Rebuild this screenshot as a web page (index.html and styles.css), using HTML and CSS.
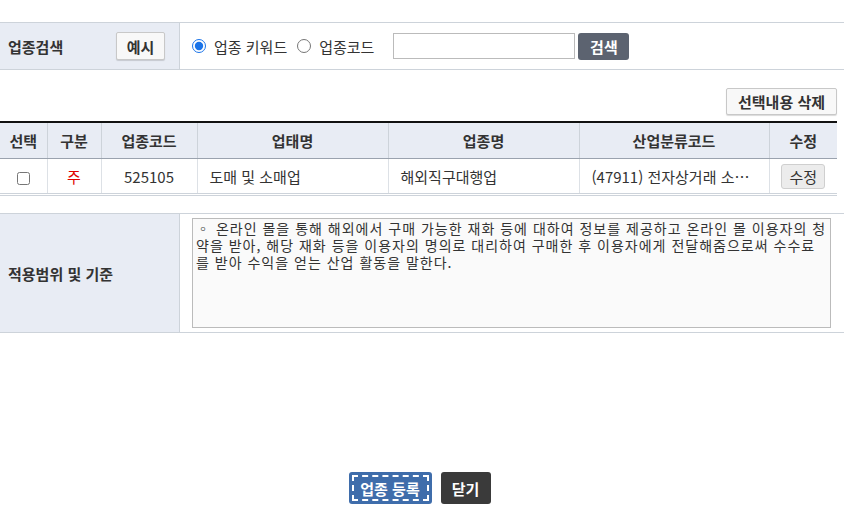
FILE: index.html
```html
<!DOCTYPE html>
<html lang="ko">
<head>
    <meta charset="UTF-8">
    <title>업종 등록</title>
    <link rel="stylesheet" href="styles.css">
</head>
<body>
    <div class="form-row search-row">
        <div class="form-label">
            <span>업종검색</span>
            <button class="btn-light btn-example">예시</button>
        </div>
        <div class="form-field">
            <label class="radio"><input type="radio" name="searchType" checked>업종 키워드</label>
            <label class="radio"><input type="radio" name="searchType">업종코드</label>
            <input type="text" class="search-input">
            <button class="btn-search">검색</button>
        </div>
    </div>

    <div class="toolbar">
        <button class="btn-light btn-delete">선택내용 삭제</button>
    </div>

    <table class="list-table">
        <colgroup>
            <col style="width: 47px">
            <col style="width: 54px">
            <col style="width: 96px">
            <col style="width: 191px">
            <col style="width: 191px">
            <col style="width: 190px">
            <col style="width: 68px">
        </colgroup>
        <thead>
            <tr>
                <th>선택</th>
                <th>구분</th>
                <th>업종코드</th>
                <th>업태명</th>
                <th>업종명</th>
                <th>산업분류코드</th>
                <th>수정</th>
            </tr>
        </thead>
        <tbody>
            <tr>
                <td class="center"><input type="checkbox" class="check"></td>
                <td class="center main">주</td>
                <td class="center">525105</td>
                <td>도매 및 소매업</td>
                <td>해외직구대행업</td>
                <td class="ellipsis">(47911) 전자상거래 소매업</td>
                <td class="center"><button class="btn-edit">수정</button></td>
            </tr>
        </tbody>
    </table>

    <div class="form-row scope-row">
        <div class="form-label">
            <span>적용범위 및 기준</span>
        </div>
        <div class="form-field">
            <textarea class="scope-text" readonly>◦ 온라인 몰을 통해 해외에서 구매 가능한 재화 등에 대하여 정보를 제공하고 온라인 몰 이용자의 청약을 받아, 해당 재화 등을 이용자의 명의로 대리하여 구매한 후 이용자에게 전달해줌으로써 수수료를 받아 수익을 얻는 산업 활동을 말한다.</textarea>
        </div>
    </div>

    <div class="bottom-buttons">
        <button class="btn-submit">업종 등록</button>
        <button class="btn-close">닫기</button>
    </div>
</body>
</html>
```

FILE: styles.css
```css
body {
    margin: 0;
    padding: 0;
    font-family: "Noto Sans CJK KR", "Noto Sans", sans-serif;
    font-size: 15px;
    color: #222;
    background: #fff;
}
button {
    font-family: inherit;
    cursor: pointer;
}
.form-row {
    display: flex;
    border-top: 1px solid #cdd3da;
    border-bottom: 1px solid #cdd3da;
}
.form-label {
    width: 180px;
    flex: none;
    box-sizing: border-box;
    padding-left: 8px;
    padding-right: 14px;
    background: #e8ecf4;
    border-right: 1px solid #cdd3da;
    display: flex;
    align-items: center;
    justify-content: space-between;
    font-weight: bold;
    color: #333;
}
.form-field {
    flex: 1;
    display: flex;
    align-items: center;
    padding-left: 12px;
}
.search-row {
    margin-top: 22px;
    height: 46px;
}
.btn-light {
    height: 28px;
    padding: 0 10px;
    background: #f8f8f8;
    border: 1px solid #c8c8c8;
    border-radius: 2px;
    box-shadow: 0 1px 1px rgba(0, 0, 0, 0.15);
    font-size: 15px;
    font-weight: bold;
    color: #333;
}
.btn-example {
    width: 49px;
    padding: 0;
}
.radio {
    display: flex;
    align-items: center;
    margin-right: 10px;
    color: #333;
}
.radio input {
    width: 14px;
    height: 14px;
    margin: 0 8px 0 0;
    accent-color: #1a73e8;
}
.search-input {
    width: 182px;
    height: 26px;
    box-sizing: border-box;
    margin-left: 9px;
    border: 1px solid #bbb;
}
.btn-search {
    width: 51px;
    height: 27px;
    margin-left: 3px;
    background: #5c6370;
    border: none;
    border-radius: 3px;
    color: #fff;
    font-size: 15px;
    font-weight: bold;
}
.toolbar {
    display: flex;
    justify-content: flex-end;
    padding: 18px 7px 6px 0;
}
.btn-delete {
    width: 111px;
    height: 27px;
    padding: 0;
}
.list-table {
    width: 837px;
    border-collapse: collapse;
    table-layout: fixed;
    border-top: 2px solid #111;
    border-bottom: 3px double #cdd3da;
}
.list-table th {
    height: 35px;
    background: #e8ecf4;
    border-left: 1px solid #cdd3da;
    border-bottom: 1px solid #9aa2ae;
    font-weight: bold;
    color: #333;
    padding: 0;
}
.list-table td {
    height: 34px;
    border-left: 1px solid #dde1e6;
    padding: 0 12px;
    color: #333;
}
.list-table th:first-child,
.list-table td:first-child {
    border-left: none;
}
.list-table td.center {
    text-align: center;
    padding: 0;
}
.list-table td.main {
    color: #e00000;
}
.list-table td.ellipsis {
    white-space: nowrap;
    overflow: hidden;
    text-overflow: ellipsis;
}
.check {
    width: 13px;
    height: 13px;
    margin: 0;
    vertical-align: middle;
}
.btn-edit {
    width: 44px;
    height: 25px;
    padding: 0;
    background: #ececec;
    border: 1px solid #cfcfcf;
    border-radius: 3px;
    font-size: 15px;
    color: #333;
}
.scope-row {
    margin-top: 17px;
    height: 118px;
}
.scope-text {
    width: 639px;
    height: 110px;
    box-sizing: border-box;
    margin: 0;
    padding: 1px 3px;
    border: 1px solid #bbb;
    background: #fafafa;
    font-family: "Noto Sans CJK KR", sans-serif;
    font-size: 14px;
    letter-spacing: 1px;
    line-height: 17px;
    color: #333;
    resize: none;
}
.bottom-buttons {
    display: flex;
    justify-content: center;
    gap: 9px;
    margin-top: 139px;
    padding-right: 5px;
}
.btn-submit {
    height: 32px;
    width: 83px;
    padding: 0;
    background: #3f6dab;
    border: none;
    border-radius: 3px;
    outline: 2px dashed #fff;
    outline-offset: -5px;
    color: #fff;
    font-size: 15px;
    font-weight: bold;
}
.btn-close {
    height: 32px;
    width: 50px;
    padding: 0;
    background: #3a3a3a;
    border: none;
    border-radius: 3px;
    color: #fff;
    font-size: 15px;
    font-weight: bold;
}
```
